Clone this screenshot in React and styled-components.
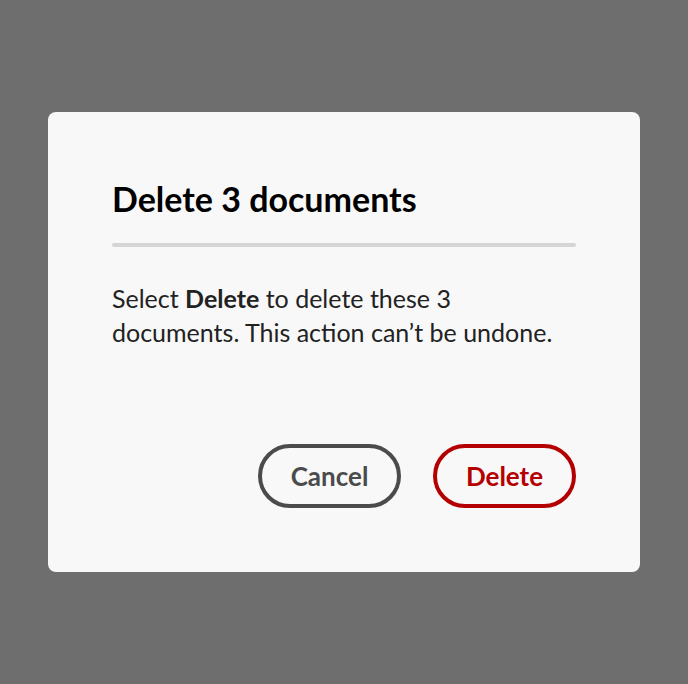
import React from "react";
import styled, { createGlobalStyle } from "styled-components";

const Global = createGlobalStyle`
  html, body { margin: 0; padding: 0; }
  body { background: #6e6e6e; font-family: "Lato", "Noto Sans", sans-serif; }
`;

const Backdrop = styled.div`
  width: 688px;
  height: 684px;
  background: #6e6e6e;
  display: flex;
  align-items: flex-start;
  justify-content: center;
  padding-top: 112px;
  box-sizing: border-box;
`;

const Dialog = styled.section`
  width: 592px;
  height: 460px;
  box-sizing: border-box;
  background: #f8f8f8;
  border-radius: 8px;
  padding: 64px;
  display: flex;
  flex-direction: column;
`;

const Title = styled.h2`
  margin: 0;
  font-size: 34px;
  line-height: 46px;
  font-weight: 700;
  color: #000;
`;

const Divider = styled.hr`
  margin: 21px 0 0;
  border: none;
  height: 4px;
  border-radius: 2px;
  background: #d5d5d5;
`;

const Body = styled.p`
  margin: 34px 0 0;
  font-size: 25px;
  line-height: 34px;
  color: #222;
`;

const Actions = styled.div`
  margin-top: auto;
  display: flex;
  justify-content: flex-end;
  gap: 32px;
`;

const Button = styled.button`
  height: 64px;
  padding: 0 28px;
  box-sizing: border-box;
  border-radius: 32px;
  background: transparent;
  border: 4px solid ${(p) => (p.$tone === "danger" ? "#b40000" : "#4b4b4b")};
  color: ${(p) => (p.$tone === "danger" ? "#b40000" : "#4b4b4b")};
  font-family: inherit;
  font-size: 26px;
  font-weight: 700;
  min-width: 143px;
  cursor: pointer;
`;

export default function App() {
  return (
    <>
      <Global />
      <Backdrop>
        <Dialog role="dialog">
          <Title>Delete 3 documents</Title>
          <Divider />
          <Body>
            Select <strong>Delete</strong> to delete these 3 documents. This action can’t be undone.
          </Body>
          <Actions>
            <Button>Cancel</Button>
            <Button $tone="danger">Delete</Button>
          </Actions>
        </Dialog>
      </Backdrop>
    </>
  );
}
